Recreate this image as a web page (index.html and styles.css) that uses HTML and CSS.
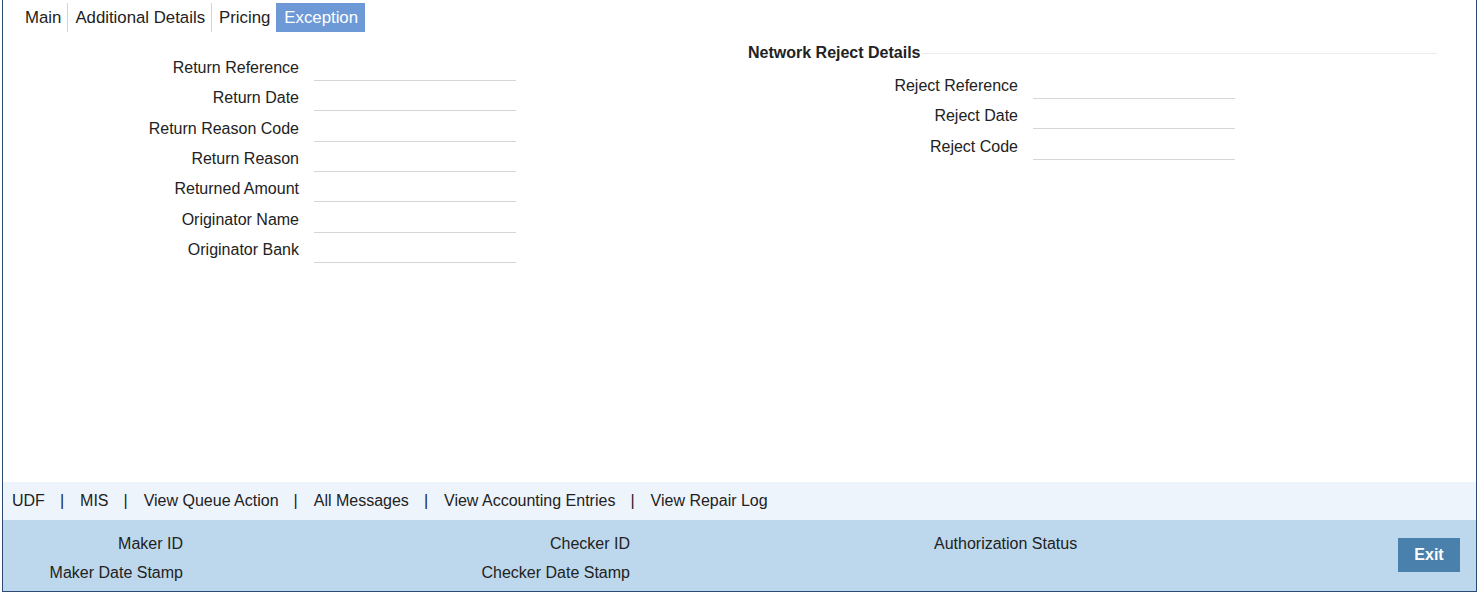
FILE: index.html
```html
<!DOCTYPE html>
<html lang="en">
<head>
    <meta charset="UTF-8">
    <title>Exception</title>
    <link rel="stylesheet" href="styles.css">
</head>
<body>
  <div class="window">

    <div class="tabs">
      <span class="tab">Main</span>
      <span class="tab">Additional Details</span>
      <span class="tab tab-last">Pricing</span>
      <span class="tab tab-active">Exception</span>
    </div>

    <div class="content">
      <div class="section-left">
        <div class="field-row"><label>Return Reference</label><span class="field-input"></span></div>
        <div class="field-row"><label>Return Date</label><span class="field-input"></span></div>
        <div class="field-row"><label>Return Reason Code</label><span class="field-input"></span></div>
        <div class="field-row"><label>Return Reason</label><span class="field-input"></span></div>
        <div class="field-row"><label>Returned Amount</label><span class="field-input"></span></div>
        <div class="field-row"><label>Originator Name</label><span class="field-input"></span></div>
        <div class="field-row"><label>Originator Bank</label><span class="field-input"></span></div>
      </div>

      <div class="section-right">
        <div class="section-heading">Network Reject Details</div>
        <div class="field-row"><label>Reject Reference</label><span class="field-input"></span></div>
        <div class="field-row"><label>Reject Date</label><span class="field-input"></span></div>
        <div class="field-row"><label>Reject Code</label><span class="field-input"></span></div>
      </div>
    </div>

    <div class="footer-links">
      <span>UDF</span><span class="sep">|</span>
      <span>MIS</span><span class="sep">|</span>
      <span>View Queue Action</span><span class="sep">|</span>
      <span>All Messages</span><span class="sep">|</span>
      <span>View Accounting Entries</span><span class="sep">|</span>
      <span>View Repair Log</span>
    </div>

    <div class="audit-bar">
      <div class="audit-col audit-col-maker">
        <div class="audit-label">Maker ID</div>
        <div class="audit-label">Maker Date Stamp</div>
      </div>
      <div class="audit-col audit-col-checker">
        <div class="audit-label">Checker ID</div>
        <div class="audit-label">Checker Date Stamp</div>
      </div>
      <div class="audit-col audit-col-status">
        <div class="audit-label">Authorization Status</div>
      </div>
      <button class="button-exit">Exit</button>
    </div>

  </div>
</body>
</html>
```

FILE: styles.css
```css
body {
    margin: 0px;
    font-family: "Liberation Sans", Arial, sans-serif;
    font-size: 16px;
    color: #222222;
    background-color: #ffffff;
}

.window {
    margin-left: 2px;
    width: 1475px;
    height: 592px;
    box-sizing: border-box;
    border-left: 1px solid #2d4a72;
    border-right: 1px solid #2d4a72;
    border-bottom: 1px solid #2d4a72;
    display: flex;
    flex-direction: column;
}

.tabs {
    display: flex;
    margin-top: 3px;
    margin-left: 15px;
    height: 29px;
    font-size: 16.8px;
}

.tab {
    line-height: 29px;
    padding: 0px 6px 0px 7px;
    border-right: 1px solid #d4d4d4;
}

.tab-last {
    border-right: 0px;
}

.tab-active {
    background-color: #6d9ad6;
    color: #ffffff;
    border-right: 0px;
    padding: 0px 0px 0px 8px;
    width: 81px;
}

.content {
    flex: 1;
    display: flex;
}

.section-left {
    width: 513px;
    padding-top: 26px;
}

.section-left label {
    width: 296px;
}

.section-right {
    margin-left: 232px;
    width: 689px;
    padding-top: 11px;
}

.section-right label {
    width: 270px;
}

.section-heading {
    display: flex;
    align-items: center;
    font-weight: bold;
    line-height: 20px;
    margin-bottom: 13px;
}

.section-heading::after {
    content: "";
    flex: 1;
    border-top: 1px solid #ececec;
    margin-left: 1px;
    margin-top: 1px;
}

.field-row {
    display: flex;
    align-items: flex-start;
    height: 30.33px;
}

.field-row label {
    text-align: right;
    line-height: 20px;
}

.field-input {
    display: block;
    margin-left: 15px;
    width: 202px;
    height: 22px;
    border-bottom: 1px solid #d6d6d6;
}

.footer-links {
    height: 38px;
    line-height: 38px;
    padding-left: 9px;
    background-color: #eef4fc;
    display: flex;
}

.sep {
    margin: 0px 16px 0px 15px;
}

.audit-bar {
    height: 71px;
    background-color: #bdd8ec;
    display: flex;
    box-sizing: border-box;
    padding-top: 14px;
}

.audit-label {
    line-height: 20px;
    height: 29px;
}

.audit-col-maker {
    width: 467px;
}

.audit-col-maker .audit-label {
    width: 180px;
    text-align: right;
}

.audit-col-checker {
    width: 464px;
}

.audit-col-checker .audit-label {
    width: 160px;
    text-align: right;
}

.audit-col-status {
    flex: 1;
}

.button-exit {
    font-family: "Liberation Sans", Arial, sans-serif;
    font-weight: bold;
    font-size: 16px;
    color: #ffffff;
    background-color: #4a80ac;
    border: 0px;
    width: 62px;
    height: 34px;
    margin-top: 4px;
    margin-right: 16px;
    padding: 0px;
    cursor: pointer;
}
```
